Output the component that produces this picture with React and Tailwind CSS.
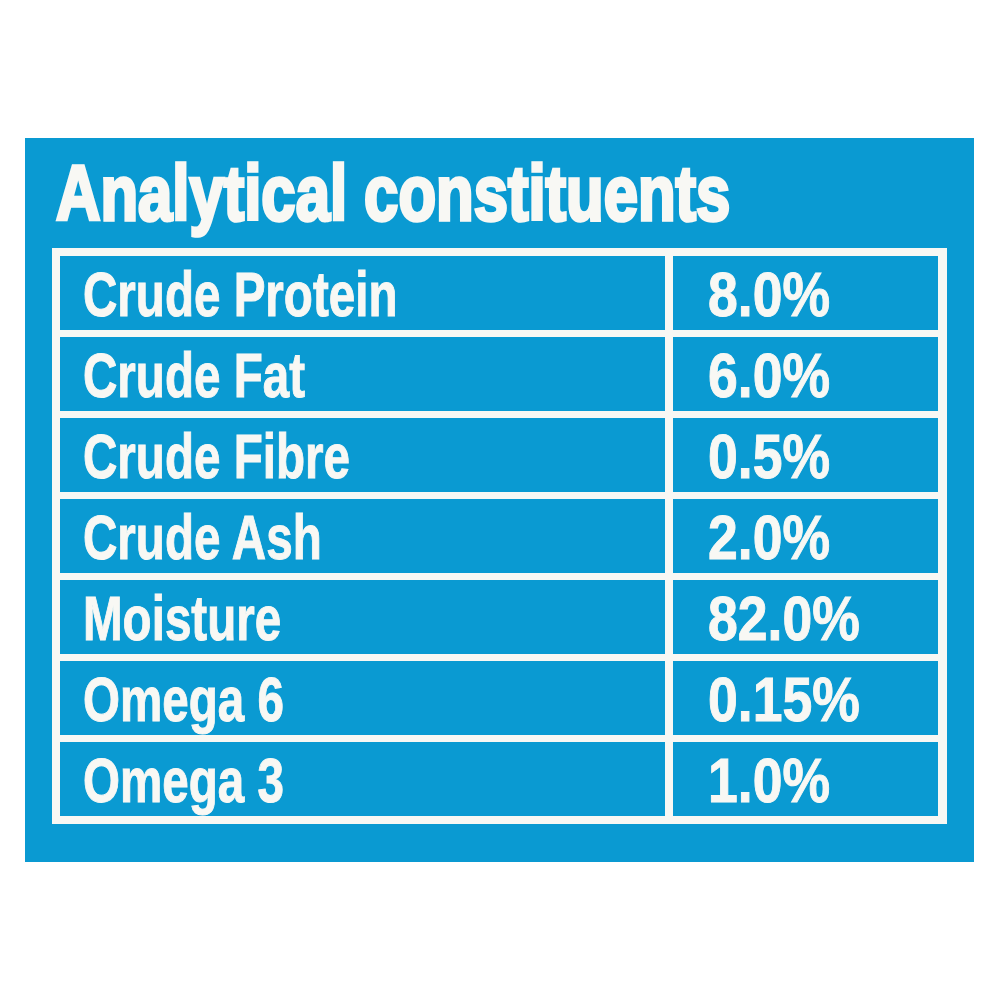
// Analytical constituents panel
const ROWS = [
  ["Crude Protein", "8.0%"],
  ["Crude Fat", "6.0%"],
  ["Crude Fibre", "0.5%"],
  ["Crude Ash", "2.0%"],
  ["Moisture", "82.0%"],
  ["Omega 6", "0.15%"],
  ["Omega 3", "1.0%"],
];

export default function App() {
  return (
    <div className="w-[1000px] h-[1000px] bg-white pt-[138px] pl-[25px]">
      <div className="w-[949px] h-[724px] bg-[#0a9ad2] pt-[17px] px-[27px] font-['Liberation_Sans',Arial,sans-serif] text-[#f8f8f4]">
        {/* 제목 (condensed look via horizontal scale) */}
        <h2 className="h-[77px] mb-[16px] text-[77px] leading-none font-bold whitespace-nowrap">
          <span className="inline-block origin-left scale-x-[0.8] pl-[5px] [-webkit-text-stroke:3.5px_#f8f8f4]">
            Analytical constituents
          </span>
        </h2>

        {/* 성분 표 */}
        <div className="w-[895px] h-[576px] bg-[#f8f8f4] p-[8px] grid grid-cols-[605px_265px] gap-x-[8px] gap-y-[7px]">
          {ROWS.map(([name, value]) => (
            <div key={name} className="contents">
              <div className="h-[74px] bg-[#0a9ad2] pl-[23px] pt-[2px] text-[63px] leading-[72px] font-bold overflow-hidden whitespace-nowrap">
                <span className="inline-block origin-left scale-x-[0.755] [-webkit-text-stroke:1px_#f8f8f4]">{name}</span>
              </div>
              <div className="h-[74px] bg-[#0a9ad2] pl-[35px] pt-[2px] text-[63px] leading-[72px] font-bold overflow-hidden whitespace-nowrap">
                <span className="inline-block origin-left scale-x-[0.85] [-webkit-text-stroke:1px_#f8f8f4]">{value}</span>
              </div>
            </div>
          ))}
        </div>
      </div>
    </div>
  );
}
